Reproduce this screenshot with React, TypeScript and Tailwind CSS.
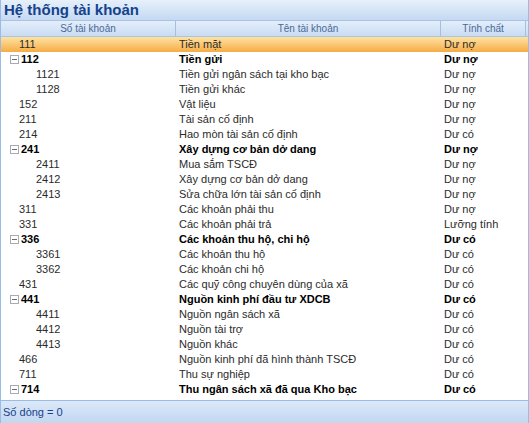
type Row = { code: string; name: string; kind: string; level: 0 | 1; group?: boolean };

const rows: Row[] = [
  { code: "111", name: "Tiền mặt", kind: "Dư nợ", level: 0 },
  { code: "112", name: "Tiền gửi", kind: "Dư nợ", level: 0, group: true },
  { code: "1121", name: "Tiền gửi ngân sách tại kho bạc", kind: "Dư nợ", level: 1 },
  { code: "1128", name: "Tiền gửi khác", kind: "Dư nợ", level: 1 },
  { code: "152", name: "Vật liệu", kind: "Dư nợ", level: 0 },
  { code: "211", name: "Tài sản cố định", kind: "Dư nợ", level: 0 },
  { code: "214", name: "Hao mòn tài sản cố định", kind: "Dư có", level: 0 },
  { code: "241", name: "Xây dựng cơ bản dở dang", kind: "Dư nợ", level: 0, group: true },
  { code: "2411", name: "Mua sắm TSCĐ", kind: "Dư nợ", level: 1 },
  { code: "2412", name: "Xây dựng cơ bản dở dang", kind: "Dư nợ", level: 1 },
  { code: "2413", name: "Sửa chữa lớn tài sản cố định", kind: "Dư nợ", level: 1 },
  { code: "311", name: "Các khoản phải thu", kind: "Dư nợ", level: 0 },
  { code: "331", name: "Các khoản phải trả", kind: "Lưỡng tính", level: 0 },
  { code: "336", name: "Các khoản thu hộ, chi hộ", kind: "Dư có", level: 0, group: true },
  { code: "3361", name: "Các khoản thu hộ", kind: "Dư có", level: 1 },
  { code: "3362", name: "Các khoản chi hộ", kind: "Dư có", level: 1 },
  { code: "431", name: "Các quỹ công chuyên dùng của xã", kind: "Dư có", level: 0 },
  { code: "441", name: "Nguồn kinh phí đầu tư XDCB", kind: "Dư có", level: 0, group: true },
  { code: "4411", name: "Nguồn ngân sách xã", kind: "Dư có", level: 1 },
  { code: "4412", name: "Nguồn tài trợ", kind: "Dư có", level: 1 },
  { code: "4413", name: "Nguồn khác", kind: "Dư có", level: 1 },
  { code: "466", name: "Nguồn kinh phí đã hình thành TSCĐ", kind: "Dư có", level: 0 },
  { code: "711", name: "Thu sự nghiệp", kind: "Dư có", level: 0 },
  { code: "714", name: "Thu ngân sách xã đã qua Kho bạc", kind: "Dư có", level: 0, group: true },
];

function Collapse() {
  return (
    <svg width="9" height="9" viewBox="0 0 9 9" className="shrink-0">
      <rect x="0.5" y="0.5" width="8" height="8" fill="#fff" stroke="#a5acb5" />
      <line x1="2" y1="4.5" x2="7" y2="4.5" stroke="#6b6b6b" />
    </svg>
  );
}

export default function App() {
  return (
    <div
      className="flex h-[423px] w-[529px] flex-col overflow-hidden border-x border-[#99bbe8] bg-white text-[11px] text-[#2b2b2b]"
      style={{ fontFamily: '"Liberation Sans", Arial, sans-serif' }}
    >
      <div className="flex h-[20px] items-center bg-gradient-to-b from-[#e7f0fb] to-[#c4d9f3] px-[3px] text-[15px] font-bold text-[#15428b]">
        Hệ thống tài khoản
      </div>
      <div className="grid h-[17px] grid-cols-[175px_265px_85px] border-y border-[#a9c3e3] bg-gradient-to-b from-[#e4eefa] to-[#c9dcf4] text-[10px] text-[#4a6a96]">
        <div className="flex items-center justify-center border-r border-[#a6bfdf]">Số tài khoản</div>
        <div className="flex items-center justify-center border-r border-[#a6bfdf]">Tên tài khoản</div>
        <div className="flex items-center justify-center border-r border-[#a6bfdf]">Tính chất</div>
      </div>
      <div className="flex flex-1 flex-col">
        {rows.map((r, i) => (
          <div
            key={r.code}
            className={`grid h-[15px] grid-cols-[175px_265px_85px] items-center leading-none ${
              i === 0 ? "bg-gradient-to-b from-[#fde3a0] to-[#f6ac43]" : ""
            } ${r.group ? "font-bold text-black" : ""}`}
          >
            <div
              className={`flex items-center ${
                r.level === 1 ? "pl-[35px]" : r.group ? "gap-[2px] pl-[9px]" : "pl-[18px]"
              }`}
            >
              {r.group && <Collapse />}
              <span>{r.code}</span>
            </div>
            <div className="pl-[3px]">{r.name}</div>
            <div className="pl-[3px]">{r.kind}</div>
          </div>
        ))}
      </div>
      <div className="flex h-[23px] items-center border-t border-[#99bbe8] bg-gradient-to-b from-[#dce8f8] to-[#c2d7f2] px-[2px] text-[#15428b]">
        Số dòng = 0
      </div>
    </div>
  );
}
